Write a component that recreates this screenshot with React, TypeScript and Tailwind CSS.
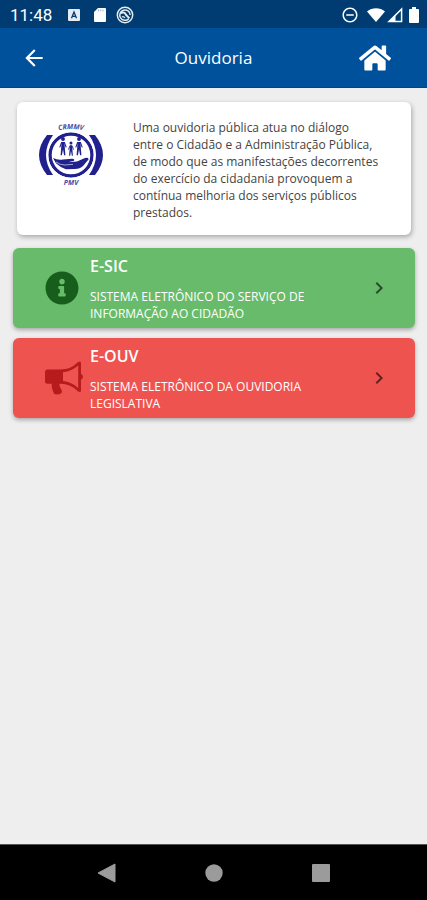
import type { ReactNode } from 'react';
import { FaHome, FaInfoCircle } from 'react-icons/fa';
import { MdArrowBack, MdChevronRight, MdRemoveCircleOutline } from 'react-icons/md';

function StatusBar() {
  return (
    <div className="flex h-7 items-center justify-between bg-[#003c71] pt-0.5 pr-2 pl-2.5 text-white">
      <div className="flex items-center">
        <span className="w-[42px] font-['Roboto',sans-serif] text-[17px] leading-5 whitespace-nowrap">11:48</span>
        <svg className="ml-4 size-3" viewBox="0 0 12 12">
          <rect width="12" height="12" rx="1" fill="#e4ebf2" />
          <path d="M3.5 9.3 6 3l2.5 6.3M4.4 7.3h3.2" fill="none" stroke="#003c71" strokeWidth="1.3" />
        </svg>
        <svg className="ml-3.5 h-3.5 w-3" viewBox="0 0 12 14">
          <path d="M4 0h7q1 0 1 1v12q0 1-1 1H1q-1 0-1-1V4z" fill="#fff" />
          <path d="M4.5 1.5v1.8M6.7 1.5v1.8M8.9 1.5v1.8" stroke="#7f9db8" strokeWidth=".8" />
        </svg>
        <svg className="ml-2.5 size-[18px]" viewBox="0 0 18 18" fill="none" stroke="#e4ebf2">
          <circle cx="9" cy="9" r="7.7" strokeWidth="1.5" />
          <path d="M12.8 12.7A5.2 5.2 0 1 1 14.2 9" strokeWidth="1.5" />
          <path d="M4.5 7c3-1.2 4.7-.4 5.4 1.8l3.5 3.6" strokeWidth="2" />
          <path d="M6 10.8c1.2-.4 2.2 0 2.9 1.2" strokeWidth="1.4" />
        </svg>
      </div>
      <div className="flex items-center">
        <MdRemoveCircleOutline className="size-[18px]" />
        <svg className="ml-2 h-3.5 w-[18px]" viewBox="0 0 18 14">
          <path d="M0 3.5Q4 .2 9 .2t9 3.3L9 14z" fill="#fff" />
        </svg>
        <svg className="ml-0.5 size-4" viewBox="0 0 16 16">
          <path d="M14.6 2v12.600H2z" fill="none" stroke="#fff" strokeWidth="1.500" />
          <path d="M8.500 7.500V14.600H2z" fill="#fff" />
        </svg>
        <svg className="ml-1.5 h-4 w-2.5" viewBox="0 0 10 16">
          <path d="M3 0h4v2h2q1 0 1 1v12q0 1-1 1H1q-1 0-1-1V3q0-1 1-1h2z" fill="#fff" />
        </svg>
      </div>
    </div>
  );
}

function Header() {
  return (
    <header className="grid h-[60px] grid-cols-3 items-center border-b border-[#08427a] bg-[#00519c] text-white">
      <button type="button" aria-label="Voltar" className="ml-[21px] justify-self-start">
        <MdArrowBack className="size-[26px]" />
      </button>
      <h1 className="text-center text-[17px] leading-6">Ouvidoria</h1>
      <button type="button" aria-label="Início" className="mr-9 justify-self-end">
        <FaHome className="size-8" />
      </button>
    </header>
  );
}

function Person({ x, y, scale }: { x: number; y: number; scale: number }) {
  return (
    <g transform={`translate(${x} ${y}) scale(${scale})`}>
      <circle cx="0" cy="0" r="1.6" fill="#20208f" stroke="none" />
      <path d="M-2.700 7-1.200 3h2.400l1.500 4" fill="none" strokeWidth=".9" />
      <path d="M-1.200 2.500h2.400l.3 4.500.5 6.500H.9L0 8.500-.9 13.500H-2l.5-6.500z" fill="#20208f" stroke="none" />
    </g>
  );
}

function Logo() {
  return (
    <svg className="h-16 w-[66px] shrink-0" viewBox="1 0 66 64" fill="none" stroke="#20208f" role="img" aria-label="Ouvidoria">
      <path id="logo-top" d="M17 8Q33 4 49 8" stroke="none" />
      <text fill="#4a4aa6" stroke="none" className="font-['Open_Sans',sans-serif] text-[7px] font-bold italic">
        <textPath href="#logo-top" startOffset="50%" textAnchor="middle">CRMMV</textPath>
      </text>
      <circle cx="33" cy="32" r="21" strokeWidth="3.4" />
      <path d="M9 12h6Q1 32 15 52H9Q-7 32 9 12zM57 12h-6Q65 32 51 52h6Q73 32 57 12z" fill="#20208f" stroke="none" />
      <circle cx="33" cy="32" r="23.500" stroke="#fff" strokeWidth="1.500" />
      <Person x={25} y={16} scale={1.2} />
      <Person x={33} y={20} scale={0.95} />
      <Person x={41} y={16} scale={1.2} />
      <path
        d="M15 35q5 2.500 10 1.500l9-.8q3 0 2 2l-6 1.600 9-.8 8-3.500q4-1 3.500 1.400L45 43q-3 3-8 3l-9 .3q-6-2-10-6z"
        fill="#20208f"
        stroke="none"
      />
      <path d="M18 39q4 3 9 3l8-.7" stroke="#fff" strokeWidth=".6" />
      <text x="33" y="62" textAnchor="middle" fill="#4a4aa6" stroke="none" className="font-['Open_Sans',sans-serif] text-[7px] font-bold italic">
        PMV
      </text>
    </svg>
  );
}

function Megaphone() {
  return (
    <svg className="h-[34px] w-[38px]" viewBox="0 0 38 34" fill="#b81b1c">
      <path d="M2.5 8.5H17v14.3H2.5Q0 22.8 0 20.3V11Q0 8.5 2.5 8.5z" />
      <path d="M6.5 21.5h8.3q-1.3 3 .5 5.200t1.700 4.600q-1.300 2.200-4.700 2.200-3 0-3.600-1.300-2.500-5.500-2.200-10.700z" />
      <path d="M16 8.5Q25.5 8.5 32.5 1.5q3.500-2.500 3.500.8V13q2 .7 2 2.700t-2 2.700v10.800q0 3.300-3.500.8Q25.500 23 16 22.800zM18 11.300v8.800q8.500.8 15.200 6.900V4.500Q26.500 10.500 18 11.300z" fillRule="evenodd" />
    </svg>
  );
}

type ServiceLinkProps = {
  title: string;
  description: string;
  icon: ReactNode;
  className: string;
};

function ServiceLink({ title, description, icon, className }: ServiceLinkProps) {
  return (
    <a href="#" className={`flex h-20 items-center rounded-md pr-6 pl-8 text-white shadow-[0_2px_4px_rgba(0,0,0,0.3)] ${className}`}>
      <span className="flex w-[45px] shrink-0">{icon}</span>
      <span className="flex-1">
        <span className="block pb-2.5 text-base leading-6 font-semibold">{title}</span>
        <span className="block max-w-60 text-xs leading-[17px]">{description}</span>
      </span>
      <MdChevronRight className="size-6 shrink-0 text-black/60" />
    </a>
  );
}

function NavigationBar() {
  return (
    <nav className="flex h-14 items-center justify-center gap-[87px] border-t border-[#555] bg-black">
      <button type="button" aria-label="Voltar" className="size-5">
        <svg viewBox="0 0 20 20">
          <path d="M18 1v18L1 10z" fill="#9b9b9b" stroke="#9b9b9b" strokeLinejoin="round" />
        </svg>
      </button>
      <button type="button" aria-label="Tela inicial" className="size-5">
        <svg viewBox="0 0 20 20">
          <circle cx="10" cy="10" r="8.7" fill="#9b9b9b" />
        </svg>
      </button>
      <button type="button" aria-label="Recentes" className="size-5">
        <svg viewBox="0 0 20 20">
          <rect x="1" y="1" width="18" height="18" rx="1" fill="#9b9b9b" />
        </svg>
      </button>
    </nav>
  );
}

export default function App() {
  return (
    <div className="flex min-h-screen flex-col bg-[#eeeeee] font-['Open_Sans',sans-serif]">
      <StatusBar />
      <Header />
      <main className="flex flex-1 flex-col pt-3.5 pr-3 pl-[13px]">
        <section className="mx-1 mb-[13px] flex items-start rounded-md bg-white px-[22px] pt-[17px] pb-3.5 shadow-[1px_2px_5px_rgba(0,0,0,0.3)]">
          <div className="mt-1 w-[94px] shrink-0">
            <Logo />
          </div>
          <p className="max-w-[247px] text-xs leading-[17px] text-[#444]">
            Uma ouvidoria pública atua no diálogo entre o Cidadão e a Administração Pública, de modo que as
            manifestações decorrentes do exercício da cidadania provoquem a contínua melhoria dos serviços públicos
            prestados.
          </p>
        </section>
        <div className="flex flex-col gap-2.5">
          <ServiceLink
            title="E-SIC"
            description="SISTEMA ELETRÔNICO DO SERVIÇO DE INFORMAÇÃO AO CIDADÃO"
            icon={<FaInfoCircle className="size-[34px] text-[#175d1c]" />}
            className="bg-[#68bb6b]"
          />
          <ServiceLink
            title="E-OUV"
            description="SISTEMA ELETRÔNICO DA OUVIDORIA LEGISLATIVA"
            icon={<Megaphone />}
            className="bg-[#ef5350]"
          />
        </div>
      </main>
      <NavigationBar />
    </div>
  );
}
